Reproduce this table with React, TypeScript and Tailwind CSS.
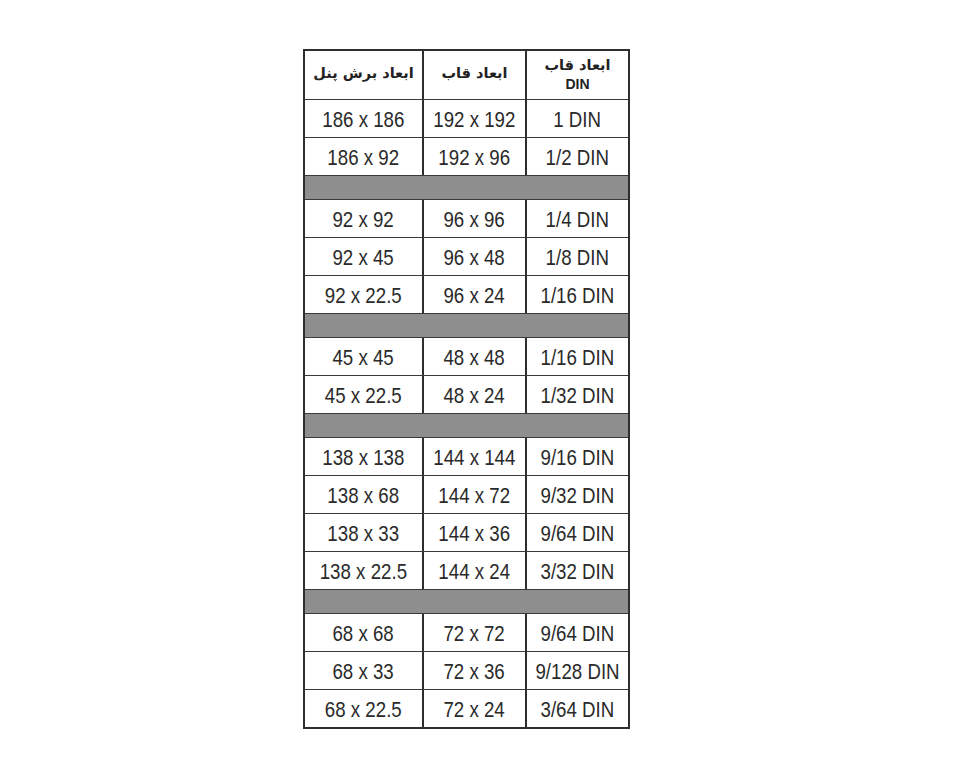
const groups: string[][][] = [
  [
    ["186 x 186", "192 x 192", "1 DIN"],
    ["186 x 92", "192 x 96", "1/2 DIN"],
  ],
  [
    ["92 x 92", "96 x 96", "1/4 DIN"],
    ["92 x 45", "96 x 48", "1/8 DIN"],
    ["92 x 22.5", "96 x 24", "1/16 DIN"],
  ],
  [
    ["45 x 45", "48 x 48", "1/16 DIN"],
    ["45 x 22.5", "48 x 24", "1/32 DIN"],
  ],
  [
    ["138 x 138", "144 x 144", "9/16 DIN"],
    ["138 x 68", "144 x 72", "9/32 DIN"],
    ["138 x 33", "144 x 36", "9/64 DIN"],
    ["138 x 22.5", "144 x 24", "3/32 DIN"],
  ],
  [
    ["68 x 68", "72 x 72", "9/64 DIN"],
    ["68 x 33", "72 x 36", "9/128 DIN"],
    ["68 x 22.5", "72 x 24", "3/64 DIN"],
  ],
];

const cols = "grid grid-cols-[117px_2px_101px_2px_101px]";

function Cell({ children }: { children: React.ReactNode }) {
  return (
    <div className="flex items-center justify-center overflow-visible pt-[3px]">
      <span className="inline-block origin-center scale-x-[0.85] whitespace-nowrap text-[22px] leading-none text-[#2a2a2a] [font-family:'Liberation_Sans',Arial,sans-serif]">
        {children}
      </span>
    </div>
  );
}

function Divider() {
  return <div className="bg-[#2e2e2e]" />;
}

function Row({ cells }: { cells: string[] }) {
  return (
    <div className={`${cols} h-[38px] border-t border-[#3a3a3a]`}>
      <Cell>{cells[0]}</Cell>
      <Divider />
      <Cell>{cells[1]}</Cell>
      <Divider />
      <Cell>{cells[2]}</Cell>
    </div>
  );
}

export default function App() {
  return (
    <div className="min-h-screen bg-white pl-[303px] pt-[49px]">
      <div className="w-[327px] border-2 border-[#2e2e2e] bg-white">
        <div className={`${cols} h-[48px]`}>
          <div
            dir="rtl"
            className="flex items-center justify-center pb-[2px] text-[14.5px] font-bold text-[#222] [font-family:'DejaVu_Sans',sans-serif]"
          >
            ابعاد برش پنل
          </div>
          <Divider />
          <div
            dir="rtl"
            className="flex items-center justify-center pb-[2px] text-[14.5px] font-bold text-[#222] [font-family:'DejaVu_Sans',sans-serif]"
          >
            ابعاد قاب
          </div>
          <Divider />
          <div className="flex flex-col items-center justify-center leading-[19px] text-[#222]">
            <span dir="rtl" className="text-[14.5px] font-bold [font-family:'DejaVu_Sans',sans-serif]">
              ابعاد قاب
            </span>
            <span className="text-[14px] font-bold [font-family:'Liberation_Sans',Arial,sans-serif]">
              DIN
            </span>
          </div>
        </div>
        {groups.map((g, gi) => (
          <div key={gi}>
            {gi > 0 && <div className="h-[24px] border-t border-[#3a3a3a] bg-[#8e8e8e]" />}
            {g.map((r, ri) => (
              <Row key={ri} cells={r} />
            ))}
          </div>
        ))}
      </div>
    </div>
  );
}
